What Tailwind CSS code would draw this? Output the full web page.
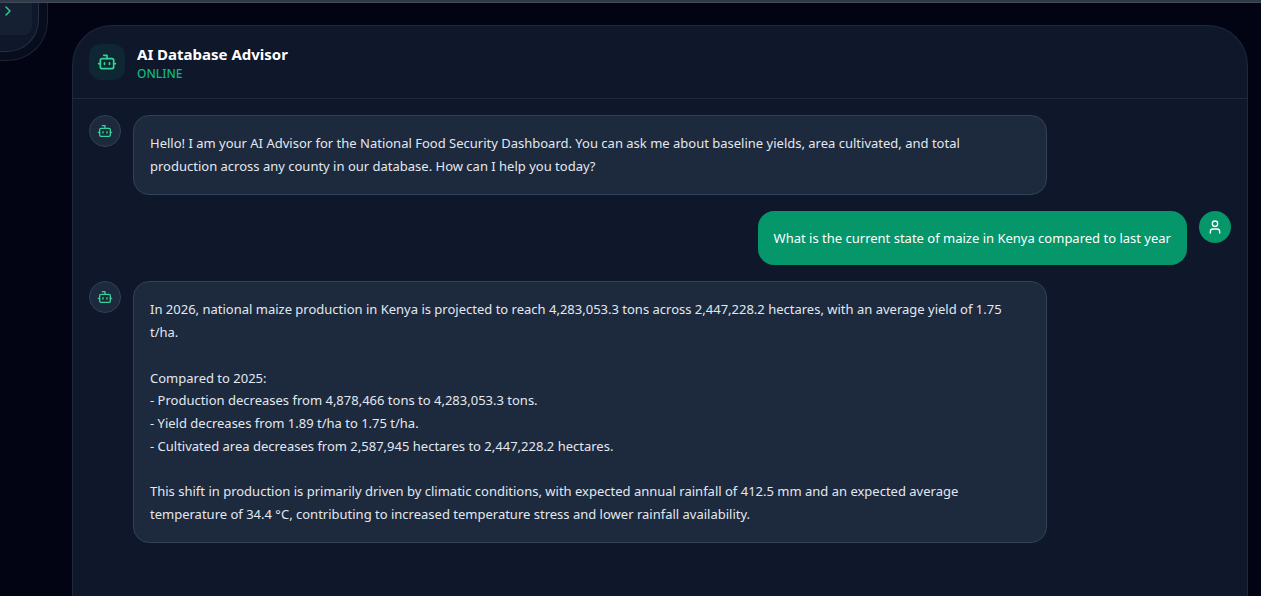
<!DOCTYPE html>
<html lang="en">
<head>
  <meta charset="UTF-8" />
  <meta name="viewport" content="width=device-width, initial-scale=1.0"/>
  <title>AI Database Advisor</title>
  <script src="https://cdn.jsdelivr.net/npm/@tailwindcss/browser@4"></script>
</head>
<body class="bg-[#020413] font-['Noto_Sans',sans-serif] text-slate-200 flex flex-col h-screen overflow-hidden">
  <!-- Icons -->
  <svg class="hidden">
    <symbol id="icon-bot" viewBox="0 0 24 24" fill="none" stroke="currentColor" stroke-width="2" stroke-linecap="round" stroke-linejoin="round">
      <path d="M12 8V4H8"/><rect width="16" height="12" x="4" y="8" rx="2"/><path d="M2 14h2"/><path d="M20 14h2"/><path d="M15 13v2"/><path d="M9 13v2"/>
    </symbol>
    <symbol id="icon-user" viewBox="0 0 24 24" fill="none" stroke="currentColor" stroke-width="2" stroke-linecap="round" stroke-linejoin="round">
      <path d="M19 21v-2a4 4 0 0 0-4-4H9a4 4 0 0 0-4 4v2"/><circle cx="12" cy="7" r="4"/>
    </symbol>
  </svg>

  <div class="h-[3px] shrink-0 bg-[#303a49] border-b border-[#424957]"></div>

  <div class="flex flex-1 min-h-0">
    <!-- Sidebar -->
    <aside class="w-12 shrink-0">
      <div class="bg-[#080d1e] border-r border-b border-[#1d2534] rounded-br-[40px] pr-2 pb-2">
        <div class="bg-[#0f172a] border-r border-b border-[#263041] rounded-br-[32px] pr-[6px] pb-4">
          <button type="button" aria-label="Expand menu" class="flex w-full h-8 bg-[#152033] rounded-br-lg text-[#34d399]">
            <svg class="size-4" viewBox="0 0 24 24" fill="none" stroke="currentColor" stroke-width="2" stroke-linecap="round" stroke-linejoin="round"><path d="m9 18 6-6-6-6"/></svg>
          </button>
        </div>
      </div>
    </aside>

    <!-- Chat -->
    <main class="flex flex-1 min-w-0 pl-6 pr-[13px] pt-[22px]">
      <section class="flex-1 min-w-0 bg-[#0f172a] border border-b-0 border-slate-800 rounded-t-[40px] overflow-hidden">
        <header class="flex items-center gap-3 p-4 border-b border-slate-800">
          <div class="size-9 shrink-0 flex items-center justify-center rounded-xl bg-[#10b981]/10 text-[#34d399]">
            <svg class="size-5"><use href="#icon-bot"/></svg>
          </div>
          <div>
            <h1 class="text-[15px] leading-6 font-bold text-white">AI Database Advisor</h1>
            <p class="text-xs leading-4 font-medium text-[#10b981]">ONLINE</p>
          </div>
        </header>

        <div class="flex flex-col gap-4 p-4 text-[13px] leading-[1.75]">
          <div class="flex gap-3">
            <div class="size-8 shrink-0 flex items-center justify-center rounded-full bg-slate-800 border border-slate-700 text-[#34d399]">
              <svg class="size-4"><use href="#icon-bot"/></svg>
            </div>
            <div class="max-w-4/5 p-4 rounded-2xl bg-slate-800 border border-slate-700">Hello! I am your AI Advisor for the National Food Security Dashboard. You can ask me about baseline yields, area cultivated, and total production across any county in our database. How can I help you today?</div>
          </div>

          <div class="flex flex-row-reverse gap-3">
            <div class="size-8 shrink-0 flex items-center justify-center rounded-full bg-[#059669] text-white">
              <svg class="size-4"><use href="#icon-user"/></svg>
            </div>
            <div class="max-w-4/5 p-4 rounded-2xl bg-[#059669] text-white">What is the current state of maize in Kenya compared to last year</div>
          </div>

          <div class="flex gap-3">
            <div class="size-8 shrink-0 flex items-center justify-center rounded-full bg-slate-800 border border-slate-700 text-[#34d399]">
              <svg class="size-4"><use href="#icon-bot"/></svg>
            </div>
            <div class="max-w-4/5 p-4 rounded-2xl bg-slate-800 border border-slate-700 whitespace-pre-wrap">In 2026, national maize production in Kenya is projected to reach 4,283,053.3 tons across 2,447,228.2 hectares, with an average yield of 1.75 t/ha.

Compared to 2025:
- Production decreases from 4,878,466 tons to 4,283,053.3 tons.
- Yield decreases from 1.89 t/ha to 1.75 t/ha.
- Cultivated area decreases from 2,587,945 hectares to 2,447,228.2 hectares.

This shift in production is primarily driven by climatic conditions, with expected annual rainfall of 412.5 mm and an expected average temperature of 34.4 °C, contributing to increased temperature stress and lower rainfall availability.</div>
          </div>
        </div>
      </section>
    </main>
  </div>
</body>
</html>
